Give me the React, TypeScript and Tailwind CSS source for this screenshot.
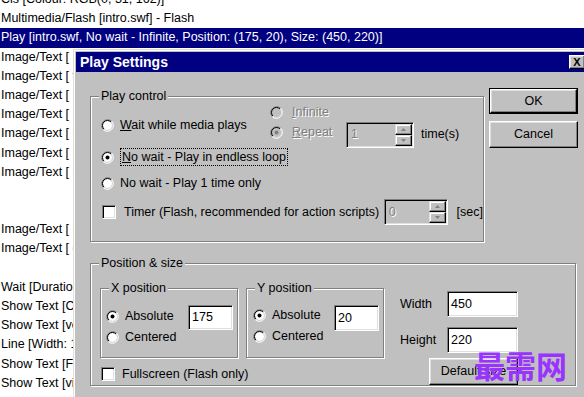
import React from "react";

const rows: { t: string; sel?: boolean }[] = [
  { t: "Cls [Colour: RGB(0, 31, 162)]" },
  { t: "Multimedia/Flash [intro.swf] - Flash" },
  { t: "Play [intro.swf, No wait - Infinite, Position: (175, 20), Size: (450, 220)]", sel: true },
  { t: "Image/Text [ logo.bmp]" },
  { t: "Image/Text [ title.bmp]" },
  { t: "Image/Text [ menu.bmp]" },
  { t: "Image/Text [ item1.bmp]" },
  { t: "Image/Text [ item2.bmp]" },
  { t: "Image/Text [ item3.bmp]" },
  { t: "Image/Text [ item4.bmp]" },
  { t: "" },
  { t: "" },
  { t: "Image/Text [ back.bmp]" },
  { t: "Image/Text [ exit.bmp]" },
  { t: "" },
  { t: "Wait [Duration: 1000 ms]" },
  { t: "Show Text [Copyright]" },
  { t: "Show Text [version 1.0]" },
  { t: "Line [Width: 1, Colour: RGB(0, 0, 0)]" },
  { t: "Show Text [Flash intro]" },
  { t: "Show Text [visit us]" },
];

function Radio({ checked = false, disabled = false }: { checked?: boolean; disabled?: boolean }) {
  return (
    <svg width="13" height="13" viewBox="0 0 13 13" className="shrink-0">
      <circle cx="6.5" cy="6.5" r="4.6" fill={disabled ? "#c0c0c0" : "#ffffff"} />
      <path d="M2.26 10.74 A6 6 0 0 1 10.74 2.26" fill="none" stroke="#808080" strokeWidth="1" />
      <path d="M10.74 2.26 A6 6 0 0 1 2.26 10.74" fill="none" stroke="#ffffff" strokeWidth="1" />
      <path d="M2.96 10.04 A5 5 0 0 1 10.04 2.96" fill="none" stroke="#000000" strokeWidth="1" />
      <path d="M10.04 2.96 A5 5 0 0 1 2.96 10.04" fill="none" stroke="#dfdfdf" strokeWidth="1" />
      {checked && <circle cx="6.5" cy="6.5" r="2" fill={disabled ? "#808080" : "#000000"} />}
    </svg>
  );
}

function Check() {
  return (
    <span className="block w-[14px] h-[14px] shrink-0 bg-white border border-t-[#808080] border-l-[#808080] border-r-white border-b-white shadow-[inset_1px_1px_0_#000,inset_-1px_-1px_0_#dfdfdf]" />
  );
}

function Field({ value, className }: { value: string; className: string }) {
  return (
    <div
      className={
        "flex items-center bg-white pl-[3px] border border-t-[#808080] border-l-[#808080] border-r-white border-b-white shadow-[inset_1px_1px_0_#000,inset_-1px_-1px_0_#dfdfdf] " +
        className
      }
    >
      {value}
    </div>
  );
}

function ArrowBtn({ up = false }: { up?: boolean }) {
  return (
    <div className="flex-1 flex items-center justify-center bg-[#c0c0c0] border border-t-[#dfdfdf] border-l-[#dfdfdf] border-r-black border-b-black shadow-[inset_-1px_-1px_0_#808080,inset_1px_1px_0_#fff]">
      <svg width="5" height="3" viewBox="0 0 5 3">
        {up ? <path d="M2.5 0 L5 3 L0 3 Z" fill="#808080" /> : <path d="M0 0 L5 0 L2.5 3 Z" fill="#808080" />}
      </svg>
    </div>
  );
}

function Spin({ value, className }: { value: string; className: string }) {
  return (
    <div
      className={
        "flex bg-[#c0c0c0] p-[1px] border border-t-[#808080] border-l-[#808080] border-r-white border-b-white shadow-[inset_1px_1px_0_#000,inset_-1px_-1px_0_#dfdfdf] " +
        className
      }
    >
      <span className="flex-1 pl-[3px] flex items-center text-[#808080] [text-shadow:1px_1px_0_#fff]">{value}</span>
      <div className="flex flex-col w-[17px]">
        <ArrowBtn up />
        <ArrowBtn />
      </div>
    </div>
  );
}

function Group({ label, className, children }: { label: string; className: string; children: React.ReactNode }) {
  return (
    <div className={"relative border border-[#808080] shadow-[inset_1px_1px_0_#fff,1px_1px_0_#fff] " + className}>
      <span className="absolute left-[8px] top-[-9px] bg-[#c0c0c0] px-[2px] leading-[16px] whitespace-nowrap">{label}</span>
      {children}
    </div>
  );
}

function Raised({ children, className }: { children: React.ReactNode; className: string }) {
  return (
    <div
      className={
        "flex items-center justify-center bg-[#c0c0c0] border border-t-white border-l-white border-r-black border-b-black shadow-[inset_-1px_-1px_0_#808080,inset_1px_1px_0_#dfdfdf] " +
        className
      }
    >
      {children}
    </div>
  );
}

const dis = "text-[#808080] [text-shadow:1px_1px_0_#fff]";

export default function App() {
  return (
    <div className="relative w-[584px] h-[397px] overflow-hidden bg-white font-['Liberation_Sans',Arial,sans-serif] text-[12.5px] text-black">
      <div className="mt-[-10px]">
        {rows.map((r, i) => (
          <div
            key={i}
            className={
              "h-[19.2px] leading-[19.2px] whitespace-nowrap overflow-hidden pl-[1px] " +
              (r.sel ? "bg-[#000080] text-white " : "") +
              (i >= 3 ? "w-[73px]" : "")
            }
          >
            {r.t}
          </div>
        ))}
      </div>

      <div className="absolute left-[73px] top-[49px] w-[530px] h-[360px] bg-[#c0c0c0] border-t border-l border-[#dfdfdf]">
        <div className="h-full border-t border-l border-white p-[1px]">
          <div className="w-[511px] h-[20px] bg-[#000080] flex items-center pl-[4px]">
            <span className="text-white font-bold text-[14px] leading-none">Play Settings</span>
            <Raised className="ml-auto mr-[2px] w-[16px] h-[14px]">
              <span className="font-bold text-[11px] leading-none text-black">X</span>
            </Raised>
          </div>

          <div className="pl-[14px] pt-[16px]">
            <div className="flex items-start">
              <Group label="Play control" className="w-[394px] h-[146px] mt-[8px]">
                <div className="pl-[10px] pt-[6px]">
                  <div className="flex h-[44px]">
                    <div className="w-[169px] flex items-center">
                      <Radio />
                      <span className="ml-[6px] whitespace-nowrap">
                        <span className="underline">W</span>ait while media plays
                      </span>
                    </div>
                    <div className="flex flex-col">
                      <div className="h-[19px] flex items-center">
                        <Radio disabled />
                        <span className={"ml-[9px] " + dis}>
                          <span className="underline">I</span>nfinite
                        </span>
                      </div>
                      <div className="flex items-start">
                        <div className="h-[22px] w-[76px] flex items-center">
                          <Radio checked disabled />
                          <span className={"ml-[9px] " + dis}>
                            <span className="underline">R</span>epeat
                          </span>
                        </div>
                        <Spin value="1" className="w-[68px] h-[26px]" />
                        <span className="ml-[7px] h-[26px] flex items-center whitespace-nowrap">time(s)</span>
                      </div>
                    </div>
                  </div>
                  <div className="h-[20px] flex items-center">
                    <Radio checked />
                    <span className="ml-[6px] border border-dotted border-black px-[1px] leading-[16px] whitespace-nowrap">
                      <span className="underline">N</span>o wait - Play in endless loop
                    </span>
                  </div>
                  <div className="mt-[6px] h-[20px] flex items-center">
                    <Radio />
                    <span className="ml-[6px] whitespace-nowrap">No wait - Play 1 time only</span>
                  </div>
                  <div className="mt-[6px] h-[26px] flex items-center">
                    <span className="ml-[1px]">
                      <Check />
                    </span>
                    <span className="ml-[8px] w-[260px] whitespace-nowrap">
                      Timer (Flash, recommended for action scripts)
                    </span>
                    <Spin value="0" className="w-[64px] h-[26px]" />
                    <span className="ml-[9px]">[sec]</span>
                  </div>
                </div>
              </Group>

              <div className="ml-[5px] flex flex-col gap-[7px]">
                <div className="w-[89px] h-[26px] border border-black">
                  <Raised className="w-full h-full">OK</Raised>
                </div>
                <Raised className="w-[89px] h-[27px]">Cancel</Raised>
              </div>
            </div>

            <Group label="Position & size" className="w-[486px] h-[123px] mt-[21px]">
              <div className="flex pl-[9px] pt-[24px]">
                <div className="flex flex-col">
                  <div className="flex">
                    <Group label="X position" className="w-[138px] h-[70px]">
                      <div className="flex pl-[5px] pt-[16px]">
                        <div className="w-[82px] flex flex-col pt-[1px] gap-[1px]">
                          <div className="h-[20px] flex items-center">
                            <Radio checked />
                            <span className="ml-[6px]">Absolute</span>
                          </div>
                          <div className="h-[20px] flex items-center">
                            <Radio />
                            <span className="ml-[6px]">Centered</span>
                          </div>
                        </div>
                        <Field value="175" className="w-[45px] h-[25px]" />
                      </div>
                    </Group>
                    <Group label="Y position" className="ml-[8px] w-[138px] h-[70px]">
                      <div className="flex pl-[6px] pt-[16px]">
                        <div className="w-[81px] flex flex-col gap-[1px]">
                          <div className="h-[20px] flex items-center">
                            <Radio checked />
                            <span className="ml-[6px]">Absolute</span>
                          </div>
                          <div className="h-[20px] flex items-center">
                            <Radio />
                            <span className="ml-[6px]">Centered</span>
                          </div>
                        </div>
                        <Field value="20" className="w-[45px] h-[26px]" />
                      </div>
                    </Group>
                  </div>
                  <div className="mt-[8px] h-[16px] flex items-center">
                    <span className="ml-[1px]">
                      <Check />
                    </span>
                    <span className="ml-[7px] whitespace-nowrap">Fullscreen (Flash only)</span>
                  </div>
                </div>
                <div className="ml-[16px] flex flex-col">
                  <div className="mt-[3px] flex items-center">
                    <span className="w-[47px]">Width</span>
                    <Field value="450" className="w-[71px] h-[26px]" />
                  </div>
                  <div className="mt-[10px] flex items-center">
                    <span className="w-[47px]">Height</span>
                    <Field value="220" className="w-[71px] h-[26px]" />
                  </div>
                  <Raised className="mt-[5px] ml-[29px] w-[89px] h-[27px]">Default size</Raised>
                </div>
              </div>
            </Group>
          </div>
        </div>
      </div>

      <div className="absolute left-[474px] top-[349px] text-[31px] leading-none font-bold text-[#9933ff] font-['Noto_Sans_CJK_SC',sans-serif] whitespace-nowrap">
        最需网
      </div>
    </div>
  );
}
